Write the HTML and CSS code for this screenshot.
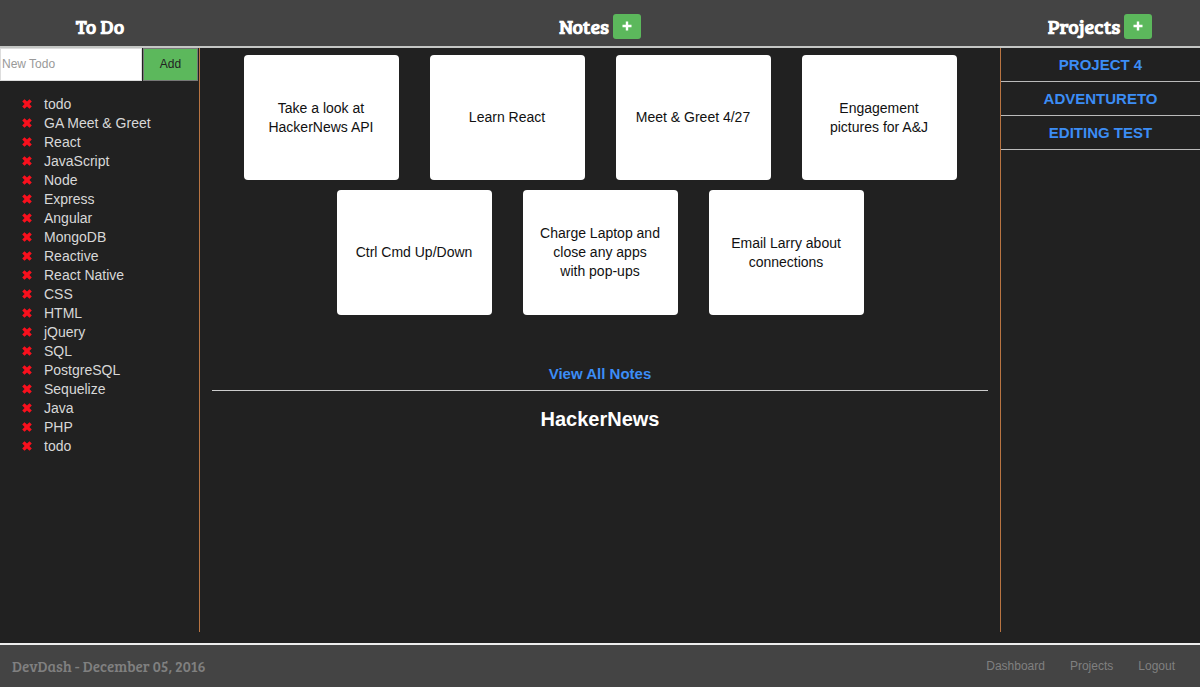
FILE: index.html
```html
<!DOCTYPE html>
<html lang="en">
<head>
<meta charset="utf-8">
<meta name="viewport" content="width=device-width, initial-scale=1">
<title>DevDash</title>
<link rel="stylesheet" href="styles.css">
</head>
<body>
<svg class="sprite" aria-hidden="true">
  <symbol id="plus" viewBox="0 0 10 10"><path d="M3.8 0.5h2.4v3.3h3.3v2.4H6.2v3.3H3.8V6.2H0.5V3.8h3.3z"/></symbol>
  <symbol id="cross" viewBox="0 0 10 10"><path d="M0.2 2.5 2.5 0.2 5 2.6 7.5 0.2 9.8 2.5 7.4 5 9.8 7.5 7.5 9.8 5 7.4 2.5 9.8 0.2 7.5 2.6 5z"/></symbol>
</svg>
<header class="topbar">
  <h2 class="title">To Do</h2>
  <h2 class="title">Notes <button class="plus" type="button" aria-label="Add note"><svg><use href="#plus"/></svg></button></h2>
  <h2 class="title">Projects <button class="plus" type="button" aria-label="Add project"><svg><use href="#plus"/></svg></button></h2>
</header>
<main class="board">
  <section class="todo">
    <form class="todo-form">
      <input class="todo-input" type="text" placeholder="New Todo" aria-label="New Todo">
      <button class="todo-add" type="button">Add</button>
    </form>
    <ul class="todo-list">
      <li><button class="remove" type="button" aria-label="Remove"><svg><use href="#cross"/></svg></button>todo</li>
      <li><button class="remove" type="button" aria-label="Remove"><svg><use href="#cross"/></svg></button>GA Meet &amp; Greet</li>
      <li><button class="remove" type="button" aria-label="Remove"><svg><use href="#cross"/></svg></button>React</li>
      <li><button class="remove" type="button" aria-label="Remove"><svg><use href="#cross"/></svg></button>JavaScript</li>
      <li><button class="remove" type="button" aria-label="Remove"><svg><use href="#cross"/></svg></button>Node</li>
      <li><button class="remove" type="button" aria-label="Remove"><svg><use href="#cross"/></svg></button>Express</li>
      <li><button class="remove" type="button" aria-label="Remove"><svg><use href="#cross"/></svg></button>Angular</li>
      <li><button class="remove" type="button" aria-label="Remove"><svg><use href="#cross"/></svg></button>MongoDB</li>
      <li><button class="remove" type="button" aria-label="Remove"><svg><use href="#cross"/></svg></button>Reactive</li>
      <li><button class="remove" type="button" aria-label="Remove"><svg><use href="#cross"/></svg></button>React Native</li>
      <li><button class="remove" type="button" aria-label="Remove"><svg><use href="#cross"/></svg></button>CSS</li>
      <li><button class="remove" type="button" aria-label="Remove"><svg><use href="#cross"/></svg></button>HTML</li>
      <li><button class="remove" type="button" aria-label="Remove"><svg><use href="#cross"/></svg></button>jQuery</li>
      <li><button class="remove" type="button" aria-label="Remove"><svg><use href="#cross"/></svg></button>SQL</li>
      <li><button class="remove" type="button" aria-label="Remove"><svg><use href="#cross"/></svg></button>PostgreSQL</li>
      <li><button class="remove" type="button" aria-label="Remove"><svg><use href="#cross"/></svg></button>Sequelize</li>
      <li><button class="remove" type="button" aria-label="Remove"><svg><use href="#cross"/></svg></button>Java</li>
      <li><button class="remove" type="button" aria-label="Remove"><svg><use href="#cross"/></svg></button>PHP</li>
      <li><button class="remove" type="button" aria-label="Remove"><svg><use href="#cross"/></svg></button>todo</li>
    </ul>
  </section>
  <section class="notes">
    <div class="cards">
      <article class="card">Take a look at HackerNews API</article>
      <article class="card">Learn React</article>
      <article class="card">Meet &amp; Greet 4/27</article>
      <article class="card">Engagement pictures for A&amp;J</article>
      <article class="card">Ctrl Cmd Up/Down</article>
      <article class="card">Charge Laptop and close any apps with pop-ups</article>
      <article class="card">Email Larry about connections</article>
    </div>
    <a class="view-all" href="#">View All Notes</a>
    <h3 class="news">HackerNews</h3>
  </section>
  <nav class="projects" aria-label="Projects">
    <a href="#">PROJECT 4</a>
    <a href="#">ADVENTURETO</a>
    <a href="#">EDITING TEST</a>
  </nav>
</main>
<footer class="footer">
  <p class="brand">DevDash - December 05, 2016</p>
  <nav class="links" aria-label="Site">
    <a href="#">Dashboard</a>
    <a href="#">Projects</a>
    <a href="#">Logout</a>
  </nav>
</footer>
</body>
</html>
```
FILE: styles.css
```css
* { box-sizing: border-box; }

body {
  margin: 0;
  min-height: 100vh;
  display: flex;
  flex-direction: column;
  background: #212121;
  color: #d8d8d8;
  font: 14px/19px "Helvetica Neue", "Liberation Sans", Arial, sans-serif;
}

button, input { font: inherit; }
a { text-decoration: none; }
.sprite { display: none; }

.topbar, .board {
  display: grid;
  grid-template-columns: 200px minmax(0, 1fr) 200px;
}

.topbar {
  padding: 10px 0 4px;
  background: #444;
  border-bottom: 2px solid #c4c6c4;
}

.title {
  display: flex;
  align-items: center;
  justify-content: center;
  gap: 4px;
  min-height: 32px;
  margin: 0;
  color: #fff;
  font: bold 20px/24px "Bree Serif", "Liberation Serif", serif;
}

.plus {
  display: grid;
  place-items: center;
  width: 28px;
  height: 25px;
  padding: 0;
  border: 0;
  border-radius: 3px;
  background: #5cb85c;
  fill: #fff;
}
.plus svg, .remove svg { width: 10px; height: 10px; }

.board { flex: 1; padding-bottom: 11px; }

.todo { border-right: 1px solid #b87442; }
.todo-form { display: flex; height: 33px; }
.todo-input {
  flex: 1;
  min-width: 0;
  padding: 0 1px;
  border: 1px solid #ddd;
  border-radius: 0;
  background: #fff;
  color: #222;
  font-size: 12px;
}
.todo-input::placeholder { color: #999; opacity: 1; }
.todo-add {
  width: 55px;
  margin: 0 1px;
  padding: 0;
  border: 1px solid #777;
  background: #5cb85c;
  color: #222;
  font-size: 12px;
}

.todo-list {
  margin: 0;
  padding: 14px 0 0 22px;
  list-style: none;
}
.todo-list li { display: flex; align-items: center; gap: 12px; }
.remove {
  display: flex;
  padding: 0 0 1px;
  border: 0;
  background: none;
  fill: #f9101d;
}

.notes { padding: 7px 12px; text-align: center; }
.cards {
  display: flex;
  flex-wrap: wrap;
  justify-content: center;
  gap: 10px 31px;
}
.card {
  display: flex;
  align-items: center;
  justify-content: center;
  width: 155px;
  height: 125px;
  padding: 0 17px;
  border-radius: 4px;
  background: #fff;
  color: #111;
}
.view-all {
  display: block;
  margin-top: 49px;
  padding-bottom: 7px;
  border-bottom: 1px solid #ccc;
  color: #3c8df5;
  font-size: 15px;
  font-weight: bold;
}
.news {
  margin: 16px 0 0;
  color: #fff;
  font-size: 20px;
  line-height: 24px;
}

.projects { border-left: 1px solid #b87442; }
.projects a {
  display: block;
  padding: 7px 0;
  border-bottom: 1px solid #bbb;
  color: #3c8df5;
  font-size: 15px;
  font-weight: bold;
  text-align: center;
}

.footer {
  display: flex;
  align-items: center;
  justify-content: space-between;
  padding: 11px 25px 11px 12px;
  border-top: 2px solid #eee;
  background: #444;
  color: #808080;
}
.brand {
  margin: 0;
  font: 400 15px/20px "Bree Serif", "Liberation Serif", serif;
}
.links { display: flex; gap: 25px; font-size: 12px; }
.links a { color: #808080; }
```
